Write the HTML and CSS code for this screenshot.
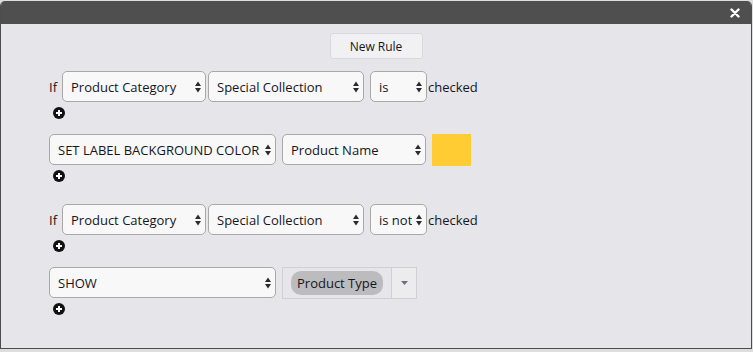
FILE: index.html
```html
<!DOCTYPE html>
<html>
<head>
    <title>Label Rules</title>
    <link rel="stylesheet" href="styles.css">
</head>
<body>

<div class="dialog">
    <div class="dialog-header">
        <button class="close" title="Close">
            <svg width="10" height="10" viewBox="0 0 10 10"><path d="M1.5 1.5 L8.5 8.5 M8.5 1.5 L1.5 8.5" stroke="#fff" stroke-width="2.4" stroke-linecap="round"/></svg>
        </button>
    </div>
    <div class="dialog-body">
        <div class="toolbar">
            <button class="btn">New Rule</button>
        </div>

        <div class="rules">
            <div class="rule">
                <div class="line">
                    <span class="word">If</span>
                    <span class="select-wrap w144">
                        <select><option>Product Category</option></select>
                        <svg class="arrows" width="6" height="12" viewBox="0 0 6 12"><path d="M0 5 L3 0.5 L6 5 Z M0 7 L3 11.5 L6 7 Z" fill="#2b2b2b"/></svg>
                    </span>
                    <span class="select-wrap w156 tight">
                        <select><option>Special Collection</option></select>
                        <svg class="arrows" width="6" height="12" viewBox="0 0 6 12"><path d="M0 5 L3 0.5 L6 5 Z M0 7 L3 11.5 L6 7 Z" fill="#2b2b2b"/></svg>
                    </span>
                    <span class="select-wrap w57">
                        <select><option>is</option></select>
                        <svg class="arrows" width="6" height="12" viewBox="0 0 6 12"><path d="M0 5 L3 0.5 L6 5 Z M0 7 L3 11.5 L6 7 Z" fill="#2b2b2b"/></svg>
                    </span>
                    <span class="word after">checked</span>
                </div>
                <div class="add"><svg width="12" height="12" viewBox="0 0 12 12"><circle cx="6" cy="6" r="6" fill="#111"/><path d="M6 3 V9 M3 6 H9" stroke="#fff" stroke-width="2"/></svg></div>

                <div class="line">
                    <span class="select-wrap w227 first">
                        <select><option>SET LABEL BACKGROUND COLOR</option></select>
                        <svg class="arrows" width="6" height="12" viewBox="0 0 6 12"><path d="M0 5 L3 0.5 L6 5 Z M0 7 L3 11.5 L6 7 Z" fill="#2b2b2b"/></svg>
                    </span>
                    <span class="select-wrap w144">
                        <select><option>Product Name</option></select>
                        <svg class="arrows" width="6" height="12" viewBox="0 0 6 12"><path d="M0 5 L3 0.5 L6 5 Z M0 7 L3 11.5 L6 7 Z" fill="#2b2b2b"/></svg>
                    </span>
                    <span class="swatch" style="background-color: #ffcc33;"></span>
                </div>
                <div class="add"><svg width="12" height="12" viewBox="0 0 12 12"><circle cx="6" cy="6" r="6" fill="#111"/><path d="M6 3 V9 M3 6 H9" stroke="#fff" stroke-width="2"/></svg></div>
            </div>

            <div class="rule">
                <div class="line">
                    <span class="word">If</span>
                    <span class="select-wrap w144">
                        <select><option>Product Category</option></select>
                        <svg class="arrows" width="6" height="12" viewBox="0 0 6 12"><path d="M0 5 L3 0.5 L6 5 Z M0 7 L3 11.5 L6 7 Z" fill="#2b2b2b"/></svg>
                    </span>
                    <span class="select-wrap w156 tight">
                        <select><option>Special Collection</option></select>
                        <svg class="arrows" width="6" height="12" viewBox="0 0 6 12"><path d="M0 5 L3 0.5 L6 5 Z M0 7 L3 11.5 L6 7 Z" fill="#2b2b2b"/></svg>
                    </span>
                    <span class="select-wrap w57">
                        <select><option>is not</option></select>
                        <svg class="arrows" width="6" height="12" viewBox="0 0 6 12"><path d="M0 5 L3 0.5 L6 5 Z M0 7 L3 11.5 L6 7 Z" fill="#2b2b2b"/></svg>
                    </span>
                    <span class="word after">checked</span>
                </div>
                <div class="add"><svg width="12" height="12" viewBox="0 0 12 12"><circle cx="6" cy="6" r="6" fill="#111"/><path d="M6 3 V9 M3 6 H9" stroke="#fff" stroke-width="2"/></svg></div>

                <div class="line">
                    <span class="select-wrap w227 first">
                        <select><option>SHOW</option></select>
                        <svg class="arrows" width="6" height="12" viewBox="0 0 6 12"><path d="M0 5 L3 0.5 L6 5 Z M0 7 L3 11.5 L6 7 Z" fill="#2b2b2b"/></svg>
                    </span>
                    <div class="multi">
                        <div class="chips"><span class="chip">Product Type</span></div>
                        <div class="caret"><svg width="7" height="4" viewBox="0 0 7 4"><path d="M0 0 H7 L3.5 4 Z" fill="#6b6f80"/></svg></div>
                    </div>
                </div>
                <div class="add"><svg width="12" height="12" viewBox="0 0 12 12"><circle cx="6" cy="6" r="6" fill="#111"/><path d="M6 3 V9 M3 6 H9" stroke="#fff" stroke-width="2"/></svg></div>
            </div>
        </div>
    </div>
</div>

</body>
</html>
```

FILE: styles.css
```css
body {
    margin: 0;
    background: #dedede;
    font-family: 'Open Sans', 'Noto Sans', sans-serif;
    font-size: 13px;
    color: #15151c;
}

.dialog {
    box-sizing: border-box;
    width: 752px;
    height: 348px;
    margin-top: 1px;
    border: 1px solid #4d4d4d;
    border-top: none;
    border-radius: 5px 5px 0 0;
    background: #e6e5ea;
    overflow: hidden;
}

.dialog-header {
    height: 23px;
    background: #4f4f4f;
    display: flex;
    justify-content: flex-end;
    align-items: center;
    padding-right: 11px;
}

.close {
    border: none;
    background: none;
    padding: 0;
    width: 10px;
    height: 10px;
    display: flex;
}

.dialog-body {
    padding-top: 9px;
}

.toolbar {
    text-align: center;
    margin-bottom: 12px;
}

.btn {
    width: 93px;
    height: 26px;
    font-family: inherit;
    font-size: 12px;
    color: #15151c;
    background: #f1f1f3;
    border: 1px solid #d9d9dd;
    border-radius: 3px;
    padding: 0;
}

.rules {
    padding-left: 48px;
}

.rule {
    padding-bottom: 7px;
}

.line {
    display: flex;
    align-items: center;
    height: 31px;
}

.word {
    margin-right: 5px;
}

.word.after {
    margin-right: 0;
}

.select-wrap {
    position: relative;
    display: block;
    height: 31px;
    margin-right: 6px;
}

.select-wrap.tight {
    margin-left: -4px;
}

.select-wrap select {
    appearance: none;
    -webkit-appearance: none;
    box-sizing: border-box;
    width: 100%;
    height: 31px;
    padding: 0 14px 0 8px;
    font-family: inherit;
    font-size: 13px;
    color: #15151c;
    background: #f8f8f8;
    border: 1px solid #a8a8a8;
    border-radius: 5px;
}

.select-wrap .arrows {
    position: absolute;
    right: 5px;
    top: 10px;
    pointer-events: none;
}

.w57 { width: 57px; margin-right: 1px; }
.w144 { width: 144px; }
.w156 { width: 156px; }
.w227 { width: 227px; }

.swatch {
    width: 39px;
    height: 32px;
}

.add {
    height: 12px;
    margin: 5px 0 15px 4px;
    display: flex;
}

.multi {
    box-sizing: border-box;
    width: 135px;
    height: 32px;
    display: flex;
    border: 1px solid #cfcfd4;
}

.chips {
    flex: 1;
    display: flex;
    align-items: center;
    padding-left: 8px;
}

.chip {
    height: 24px;
    line-height: 24px;
    padding: 0 6px;
    border-radius: 10px;
    background: #bcbcbe;
}

.caret {
    width: 24px;
    border-left: 1px solid #cfcfd4;
    background: #ececef;
    display: flex;
    align-items: center;
    justify-content: center;
}
```
